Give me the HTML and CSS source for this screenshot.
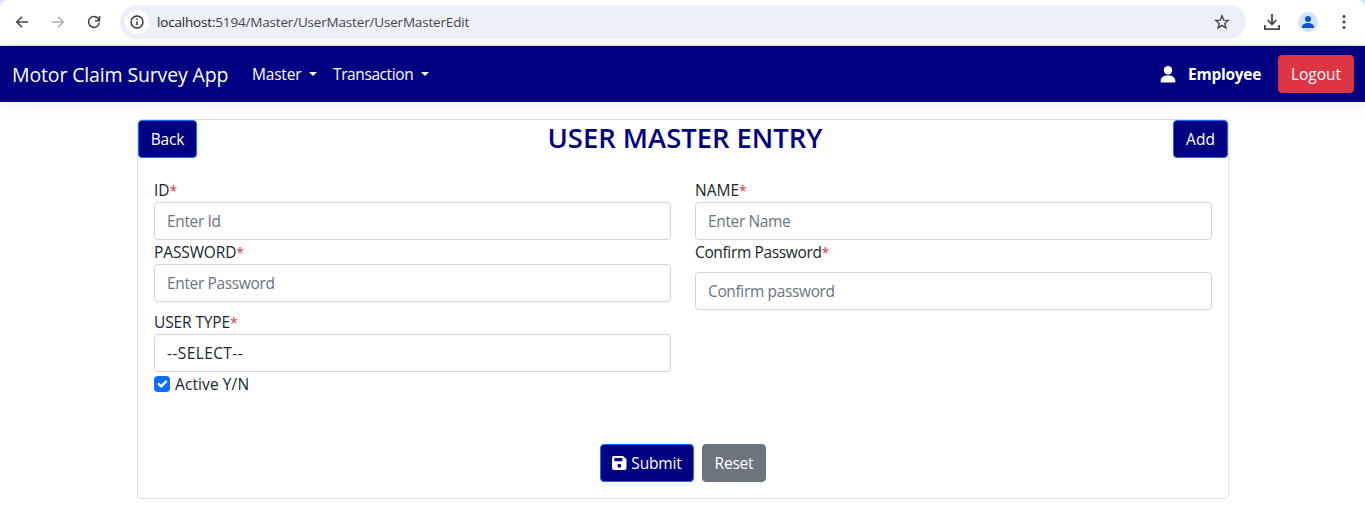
FILE: index.html
```html
<!DOCTYPE html>
<html lang="en">
<head>
<meta charset="utf-8">
<title>Motor Claim Survey App</title>
<link rel="stylesheet" href="styles.css">
</head>
<body>
<div class="browser">
  <div class="browser-bar">
    <svg class="nav-icon" width="16" height="16" viewBox="0 0 16 16" fill="none" stroke="#474747" stroke-width="1.6"><path d="M14 8H3M8 2.7 2.7 8 8 13.3"/></svg>
    <svg class="nav-icon" width="16" height="16" viewBox="0 0 16 16" fill="none" stroke="#b0b0b0" stroke-width="1.6"><path d="M2 8h11M8 2.7 13.3 8 8 13.3"/></svg>
    <svg class="nav-icon" width="16" height="16" viewBox="0 0 16 16" fill="none" stroke="#474747" stroke-width="1.6"><path d="M13.3 8.6A5.4 5.4 0 1 1 12.7 5.4L13.4 6.4M13.5 2v4.7H9"/></svg>
    <div class="address">
      <span class="site-info"><svg width="14" height="14" viewBox="0 0 14 14" fill="none" stroke="#303134" stroke-width="1.4"><circle cx="7" cy="7" r="6"/><path d="M7 6.2v4M7 3.6v1.5"/></svg></span>
      <span class="url"><b>localhost:</b>5194/Master/UserMaster/UserMasterEdit</span>
      <svg class="star" width="16" height="16" viewBox="0 0 16 16" fill="none" stroke="#474747" stroke-width="1.4"><path d="M8 1.8 9.7 6.1 14.3 6.4 10.8 9.4 11.9 13.9 8 11.4 4.1 13.9 5.2 9.4 1.7 6.4 6.3 6.1Z"/></svg>
    </div>
    <svg class="download" width="16" height="16" viewBox="0 0 16 16" fill="none" stroke="#474747" stroke-width="1.8"><path d="M8 0v10M3.8 6.2 8 10.4l4.2-4.2M.9 11v4.1h14.2V11"/></svg>
    <svg class="profile" width="20" height="20" viewBox="0 0 20 20"><circle cx="10" cy="10" r="10" fill="#d3e3fd"/><circle cx="10" cy="7" r="3" fill="#0b57d0"/><path d="M4 16v-1.500c0-2.300 3.500-3.500 6-3.500s6 1.200 6 3.500V16Z" fill="#0b57d0"/></svg>
    <svg class="dots" width="4" height="14" viewBox="0 0 4 14" fill="#474747"><circle cx="2" cy="1.600" r="1.500"/><circle cx="2" cy="7" r="1.500"/><circle cx="2" cy="12.400" r="1.500"/></svg>
  </div>
</div>
<nav class="navbar">
  <a class="brand">Motor Claim Survey App</a>
  <a class="menu menu-master"><span>Master</span><i class="caret"></i></a>
  <a class="menu menu-transaction"><span>Transaction</span><i class="caret"></i></a>
  <div class="account">
    <svg width="16" height="17" viewBox="0 0 16 17" fill="#fff"><circle cx="8" cy="4.200" r="4.200"/><path d="M.6 15.200C.6 11.500 3.500 9.600 8 9.600s7.400 1.900 7.400 5.600c0 .7-.4 1.200-1.200 1.200H1.800c-.8 0-1.200-.5-1.200-1.200Z"/></svg>
    <strong>Employee</strong>
    <button class="btn btn-danger"><span>Logout</span></button>
  </div>
</nav>
<main class="card">
  <header class="card-head">
    <button class="btn btn-primary btn-back"><span>Back</span></button>
    <h1>USER MASTER ENTRY</h1>
    <button class="btn btn-primary btn-add"><span>Add</span></button>
  </header>
  <form class="form">
    <div class="field"><label>ID<em>*</em></label><input class="tight" placeholder="Enter Id"></div>
    <div class="field"><label>NAME<em>*</em></label><input class="tight" placeholder="Enter Name"></div>
    <div class="field"><label class="label-password">PASSWORD<em>*</em></label><input class="tight" placeholder="Enter Password"></div>
    <div class="field spaced"><label class="tight">Confirm Password<em>*</em></label><input class="tight" placeholder="Confirm password"></div>
    <div class="field"><label class="label-password">USER TYPE<em>*</em></label>
      <div class="select">--SELECT--</div>
      <div class="check"><span class="box"><svg width="16" height="16" viewBox="0 0 20 20" fill="none" stroke="#fff" stroke-width="3" stroke-linecap="round" stroke-linejoin="round"><path d="m6 10 3 3 6-6"/></svg></span><span class="check-text">Active Y/N</span></div>
    </div>
  </form>
  <footer class="actions">
    <button class="btn btn-primary btn-submit"><svg width="15" height="14" viewBox="0 0 15 14"><path fill="#fff" fill-rule="evenodd" d="M2 0h9l3.500 3.300V12a2 2 0 0 1-2 2H2a2 2 0 0 1-2-2V2a2 2 0 0 1 2-2Zm.3 2v3.300h8V2Zm5 5.700a2 2 0 1 0 0 4 2 2 0 0 0 0-4Z"/></svg><span>Submit</span></button>
    <button class="btn btn-secondary"><span>Reset</span></button>
  </footer>
</main>
</body>
</html>
```
FILE: styles.css
```css
* { box-sizing: border-box; }
body { margin: 0; background: #fff; color: #212529; font: 15.500px/24px "Open Sans", "Noto Sans", sans-serif; overflow: hidden; }
button, input { font: inherit; }
svg { display: block; flex: none; }
.browser { height: 46px; background: #d3e3fd; }
.browser-bar { display: flex; align-items: center; height: 46px; padding: 0 19px 2px 14px; background: #fff; border-bottom: 1px solid #dfe1e5; border-radius: 8px 8px 0 0; }
.nav-icon { margin-right: 20px; }
.address { display: flex; align-items: center; flex: 1; height: 34px; margin-left: -2px; margin-right: 18px; padding: 0 16px 0 5px; border-radius: 17px; background: #ecf0f9; }
.site-info { display: grid; place-items: center; width: 24px; height: 24px; margin-right: 8px; border-radius: 50%; background: #fff; }
.url { flex: 1; color: #474747; font-size: 13.500px; line-height: 20px; letter-spacing: -.18px; white-space: nowrap; }
.url b { color: #1f1f1f; font-weight: 400; }
.download { margin-right: 18px; }
.profile { margin-right: 24px; }
.navbar { display: flex; align-items: center; height: 56px; padding: 0 11px 0 12px; background: #000080; color: #fff; box-shadow: 0 2px 16px rgba(0, 0, 0, .08); white-space: nowrap; }
.brand { width: 240px; font-size: 19.500px; letter-spacing: -.14px; padding-top: 1px; }
.menu { display: flex; align-items: center; letter-spacing: -.4px; }
.menu-master { width: 81px; letter-spacing: -.2px; }
.caret { margin-left: 8px; border: 4px solid transparent; border-top-color: #fff; border-bottom: 0; }
.account { display: flex; align-items: center; margin-left: auto; }
.account strong { width: 90px; margin-left: 12px; letter-spacing: -.25px; }
.btn { display: flex; align-items: center; justify-content: center; height: 38px; padding: 0; border: 1px solid; border-radius: 4px; color: #fff; white-space: nowrap; }
.btn-danger { width: 76px; background: #dc3545; border-color: #dc3545; }
.btn-primary { background: #000080; border-color: #0d6efd; }
.btn-secondary { width: 64px; background: #6c757d; border-color: #6c757d; letter-spacing: -.2px; }
.btn-back { width: 59px; letter-spacing: -.2px; }
.btn-add { width: 55px; }
.btn-submit { width: 94px; gap: 4px; letter-spacing: -.15px; }
.card { display: flex; flex-direction: column; width: 1092px; height: 380px; margin: 17px 0 0 137px; border: 1px solid #dedfe0; border-radius: 4px; }
.card-head { display: flex; justify-content: space-between; }
h1 { margin: 1px 0 0; color: #000080; font-size: 27.400px; font-weight: 600; line-height: 34px; white-space: nowrap; }
.form { display: grid; grid-template-columns: 1fr 1fr; column-gap: 24px; padding: 20px 16px 0; }
label { display: block; height: 24px; white-space: nowrap; }
label em { color: #dc3545; font-style: normal; font-size: 14px; line-height: 1; }
.label-password { letter-spacing: -.12px; }
.tight { letter-spacing: -.36px; }
input, .select { display: block; width: 100%; height: 38px; padding: 6px 12px; border: 1px solid #ced4da; border-radius: 4px; background: #fff; }
.select { letter-spacing: .4px; }
input::placeholder { color: #6c757d; opacity: 1; }
.spaced { height: 70px; }
.spaced input { margin-top: 8px; }
.check { display: flex; align-items: center; }
.check-text { letter-spacing: .1px; }
.box { width: 16px; height: 16px; margin-right: 5px; border-radius: 4px; background: #0d6efd; }
.actions { display: flex; justify-content: center; gap: 8px; margin-top: auto; padding-bottom: 16px; }
```
